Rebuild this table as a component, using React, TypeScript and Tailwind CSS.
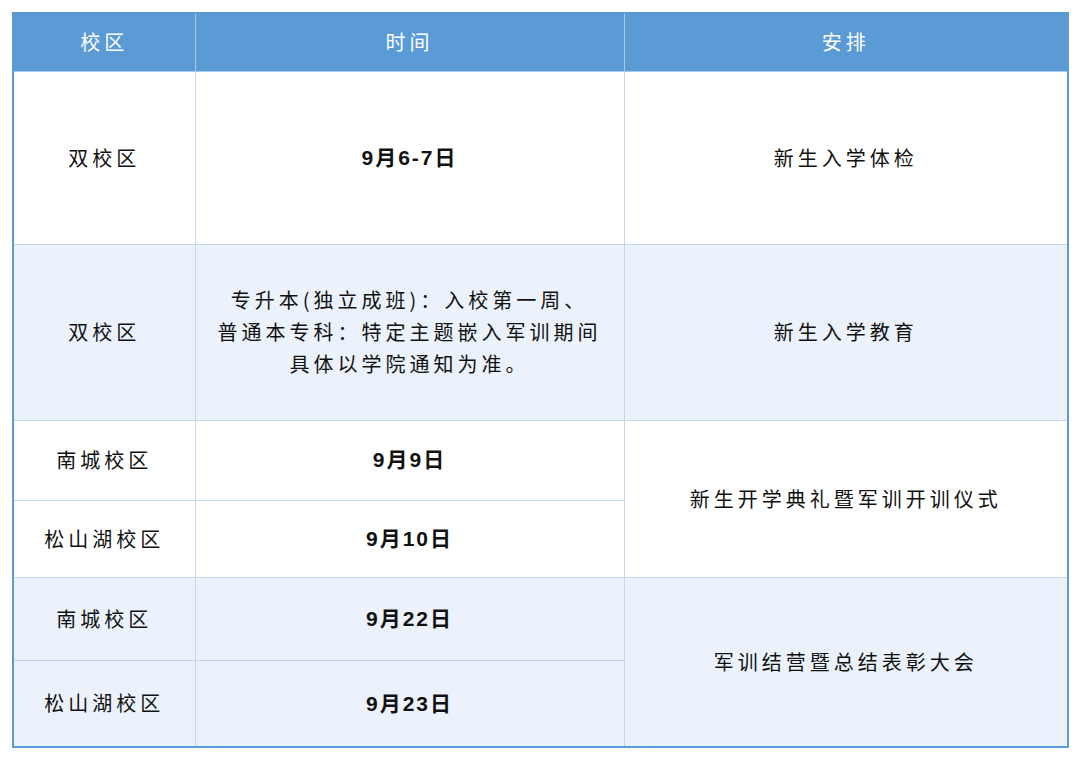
const cjk = { fontFamily: '"Noto Sans CJK SC", "Noto Sans", sans-serif' };
const num = { fontFamily: '"Liberation Sans", "Noto Sans CJK SC", sans-serif' };

const cell = 'border border-[#c3d8ef] text-center align-middle text-[20px] text-[#111] tracking-[4px]';

function DateText({ children }: { children: string }) {
  return (
    <span className="font-bold text-[21px] tracking-[2px]" style={num}>
      {children}
    </span>
  );
}

export default function App() {
  return (
    <div className="bg-white w-[1080px] h-[759px] p-[12px]" style={cjk}>
      <table className="w-[1055px] border-collapse border-2 border-[#5b9bd5] table-fixed">
        <colgroup>
          <col className="w-[182px]" />
          <col className="w-[429px]" />
          <col className="w-[444px]" />
        </colgroup>
        <thead>
          <tr className="h-[58px] bg-[#5b9bd5] text-white">
            <th className="border border-[#a9c8ea] font-normal text-[20px] tracking-[4px]">校区</th>
            <th className="border border-[#a9c8ea] font-normal text-[20px] tracking-[4px]">时间</th>
            <th className="border border-[#a9c8ea] font-normal text-[20px] tracking-[4px]">安排</th>
          </tr>
        </thead>
        <tbody>
          <tr className="h-[173px] bg-white">
            <td className={cell}>双校区</td>
            <td className={cell}><DateText>9月6-7日</DateText></td>
            <td className={cell}>新生入学体检</td>
          </tr>
          <tr className="h-[176px] bg-[#ebf2fb]">
            <td className={cell}>双校区</td>
            <td className={cell + ' leading-[32px] tracking-[3px]'}>
              <div>专升本(独立成班)：入校第一周、</div>
              <div>普通本专科：特定主题嵌入军训期间</div>
              <div>具体以学院通知为准。</div>
            </td>
            <td className={cell}>新生入学教育</td>
          </tr>
          <tr className="h-[80px] bg-white">
            <td className={cell}>南城校区</td>
            <td className={cell}><DateText>9月9日</DateText></td>
            <td className={cell} rowSpan={2}>新生开学典礼暨军训开训仪式</td>
          </tr>
          <tr className="h-[77px] bg-white">
            <td className={cell}>松山湖校区</td>
            <td className={cell}><DateText>9月10日</DateText></td>
          </tr>
          <tr className="h-[83px] bg-[#ebf2fb]">
            <td className={cell}>南城校区</td>
            <td className={cell}><DateText>9月22日</DateText></td>
            <td className={cell} rowSpan={2}>军训结营暨总结表彰大会</td>
          </tr>
          <tr className="h-[87px] bg-[#ebf2fb]">
            <td className={cell}>松山湖校区</td>
            <td className={cell}><DateText>9月23日</DateText></td>
          </tr>
        </tbody>
      </table>
    </div>
  );
}
